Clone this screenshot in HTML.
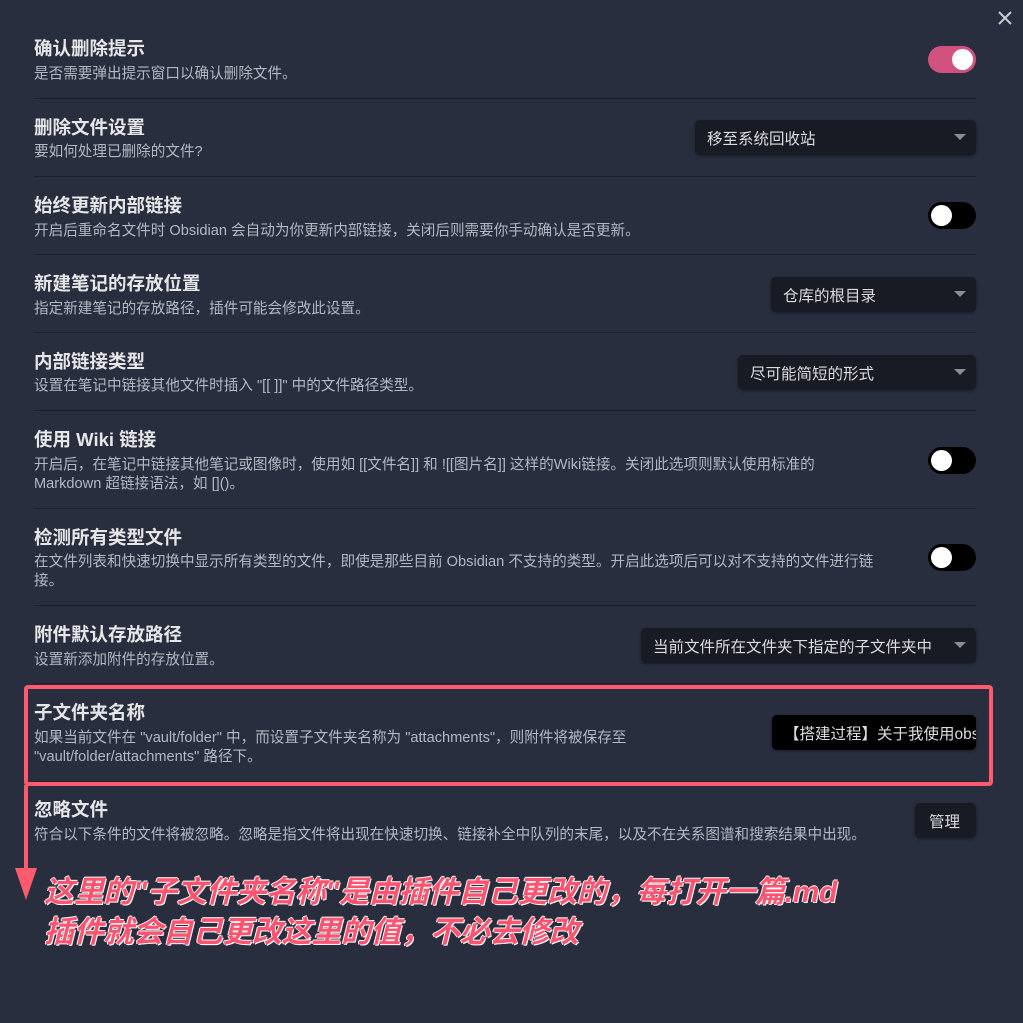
<!DOCTYPE html>
<html><head><meta charset="utf-8"><style>
*{margin:0;padding:0;box-sizing:border-box}
body{width:1023px;height:1023px;background:#282e3e;font-family:"Liberation Sans","Noto Sans CJK SC",sans-serif;position:relative;overflow:hidden;color:#dcddde}
.t{position:absolute;left:34px;font-size:18.5px;font-weight:bold;color:#e6e6e8;white-space:nowrap}
.d{position:absolute;left:34px;font-size:14.6px;color:#b4b8c2;line-height:19px}
.sep{position:absolute;left:34px;width:942px;height:1px;background:#1d212c}
.tg{position:absolute;left:928px;width:48px;height:27px;border-radius:14px;background:#000}
.tg i{position:absolute;top:3px;left:3px;width:21px;height:21px;border-radius:50%;background:#fff}
.tg.on{background:#d2527f}.tg.on i{left:24px}
.dd{position:absolute;height:35px;background:#181b24;border-radius:5px;color:#dcdde0;font-size:15.5px;padding:7px 12px;box-shadow:0 1px 3px rgba(0,0,0,.4);white-space:nowrap;overflow:hidden}
.dd.a:after{content:"";position:absolute;right:10px;top:14px;border-left:6px solid transparent;border-right:6px solid transparent;border-top:6px solid #8a8d95}
.red{color:#ff5470;font-size:30px;font-weight:bold;font-style:italic;position:absolute;left:44px;white-space:nowrap;text-shadow:1px 1px 0 #fff,-1px 0 0 #fff,0 -1px 0 #fff;letter-spacing:-0.3px}
</style></head><body>
<svg style="position:absolute;left:997px;top:10px" width="16" height="16"><path d="M2 2L14 14M14 2L2 14" stroke="#c8cad0" stroke-width="2"/></svg>

<div class="t" style="top:35px">确认删除提示</div>
<div class="d" style="top:65px">是否需要弹出提示窗口以确认删除文件。</div>
<div class="tg on" style="top:46px"><i></i></div>
<div class="sep" style="top:98px"></div>

<div class="t" style="top:114px">删除文件设置</div>
<div class="d" style="top:143px">要如何处理已删除的文件?</div>
<div class="dd a" style="left:695px;width:281px;top:120px">移至系统回收站</div>
<div class="sep" style="top:176px"></div>

<div class="t" style="top:192px">始终更新内部链接</div>
<div class="d" style="top:222px">开启后重命名文件时 Obsidian 会自动为你更新内部链接，关闭后则需要你手动确认是否更新。</div>
<div class="tg" style="top:202px"><i></i></div>
<div class="sep" style="top:254px"></div>

<div class="t" style="top:270px">新建笔记的存放位置</div>
<div class="d" style="top:300px">指定新建笔记的存放路径，插件可能会修改此设置。</div>
<div class="dd a" style="left:771px;width:205px;top:277px">仓库的根目录</div>
<div class="sep" style="top:332px"></div>

<div class="t" style="top:348px">内部链接类型</div>
<div class="d" style="top:377px">设置在笔记中链接其他文件时插入 "[[ ]]" 中的文件路径类型。</div>
<div class="dd a" style="left:738px;width:238px;top:355px">尽可能简短的形式</div>
<div class="sep" style="top:410px"></div>

<div class="t" style="top:426px">使用 Wiki 链接</div>
<div class="d" style="top:456px;width:850px">开启后，在笔记中链接其他笔记或图像时，使用如 [[文件名]] 和 ![[图片名]] 这样的Wiki链接。关闭此选项则默认使用标准的<br>Markdown 超链接语法，如 []()。</div>
<div class="tg" style="top:447px"><i></i></div>
<div class="sep" style="top:508px"></div>

<div class="t" style="top:524px">检测所有类型文件</div>
<div class="d" style="top:553px;width:870px">在文件列表和快速切换中显示所有类型的文件，即使是那些目前 Obsidian 不支持的类型。开启此选项后可以对不支持的文件进行链<br>接。</div>
<div class="tg" style="top:544px"><i></i></div>
<div class="sep" style="top:605px"></div>

<div class="t" style="top:621px">附件默认存放路径</div>
<div class="d" style="top:651px">设置新添加附件的存放位置。</div>
<div class="dd a" style="left:641px;width:335px;top:628px">当前文件所在文件夹下指定的子文件夹中</div>
<div class="sep" style="top:683px"></div>

<div class="t" style="top:699px">子文件夹名称</div>
<div class="d" style="top:729px;width:660px">如果当前文件在 "vault/folder" 中，而设置子文件夹名称为 "attachments"，则附件将被保存至<br>"vault/folder/attachments" 路径下。</div>
<div class="dd" style="left:772px;width:204px;top:715px;background:#000;padding:7px 0 7px 12px;text-overflow:clip">【搭建过程】关于我使用obsidian</div>
<div class="sep" style="top:781px"></div>

<div class="t" style="top:796px">忽略文件</div>
<div class="d" style="top:826px">符合以下条件的文件将被忽略。忽略是指文件将出现在快速切换、链接补全中队列的末尾，以及不在关系图谱和搜索结果中出现。</div>
<div class="dd" style="left:915px;width:61px;top:803px;padding:7px 14px">管理</div>

<svg style="position:absolute;left:0;top:0" width="1023" height="1023">
<rect x="26" y="687" width="965" height="97" fill="none" stroke="#ff5a6e" stroke-width="4" rx="2"/>
<path d="M26 785V880" stroke="#ff5a6e" stroke-width="4"/>
<path d="M15 868L26 900L37 868Z" fill="#ff5a6e"/>
</svg>
<div class="red" style="top:867px">这里的"子文件夹名称"是由插件自己更改的，每打开一篇.md</div>
<div class="red" style="top:907px">插件就会自己更改这里的值，不必去修改</div>
</body></html>
